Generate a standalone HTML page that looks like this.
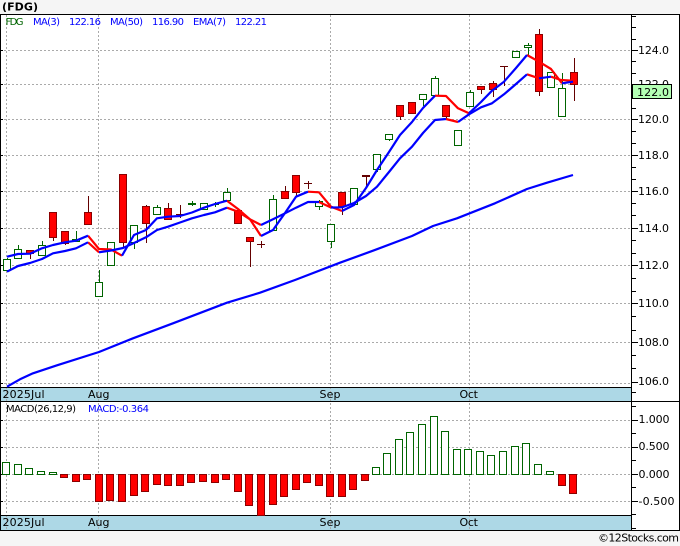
<!DOCTYPE html>
<html><head><meta charset="utf-8"><style>
html,body{margin:0;padding:0;background:#f5f5f5;width:680px;height:546px;overflow:hidden}
svg{display:block}
text{font-family:"DejaVu Sans","Liberation Sans",sans-serif}
.ax{font-size:11px;fill:#000}
.lg{font-size:10px}
</style></head><body>
<svg width="680" height="546" viewBox="0 0 680 546" xmlns="http://www.w3.org/2000/svg">
<rect x="0" y="0" width="680" height="546" fill="#f5f5f5"/>
<text x="2" y="10.5" font-size="11" font-weight="bold" fill="#000" textLength="36">(FDG)</text>
<rect x="0" y="14" width="680" height="517" fill="#fff"/>
<!-- bands -->
<rect x="0" y="387" width="632" height="14" fill="#add8e6"/>
<rect x="0" y="515" width="632" height="15" fill="#add8e6"/>
<!-- grid -->
<g stroke="#aaa" stroke-width="1" stroke-dasharray="2 2" fill="none" shape-rendering="crispEdges">
<path d="M0 50.5H632M0 84.5H632M0 119.5H632M0 155.5H632M0 191.5H632M0 228.5H632M0 265.5H632M0 303.5H632M0 342.5H632M0 383.5H632M0 420.5H632M0 447.5H632M0 474.5H632M0 501.5H632"/>
<path d="M6.5 15V530M98.5 15V530M330.5 15V530M469.5 15V530"/>
</g>
<!-- frame -->
<g stroke="#000" stroke-width="1" fill="none" shape-rendering="crispEdges">
<path d="M0 14.5H680M0 387.5H632M0 401.5H680M0 515.5H632M0 530.5H680M631.5 14V531M679.5 14V531M0.5 14V531"/>
<path d="M0 50.5H3M0 84.5H3M0 119.5H3M0 155.5H3M0 191.5H3M0 228.5H3M0 265.5H3M0 303.5H3M0 342.5H3M0 383.5H3M0 420.5H3M0 447.5H3M0 474.5H3M0 501.5H3"/>
<path d="M632 50.5H638M632 84.5H638M632 119.5H638M632 155.5H638M632 191.5H638M632 228.5H638M632 265.5H638M632 303.5H638M632 342.5H638M632 382.5H638M632 420.5H638M632 447.5H638M632 474.5H638M632 501.5H638"/>
<path d="M632 16.5H636M632 27.5H636M632 39.5H636M632 61.5H636M632 73.5H636M632 108.5H636M632 131.5H636M632 143.5H636M632 167.5H636M632 179.5H636M632 203.5H636M632 215.5H636M632 240.5H636M632 253.5H636M632 278.5H636M632 291.5H636M632 316.5H636M632 330.5H636M632 355.5H636M632 368.5H636M632 392.5H636M632 406.5H636M632 433.5H636M632 460.5H636M632 487.5H636M632 514.5H636M632 528.5H636"/>
</g>
<!-- wicks green -->
<path shape-rendering="crispEdges" fill="none" stroke="#006400" d="M7.5 258V272M18.5 245V250M42.5 241V246M76.5 231V242M99.5 270V283M111.5 242V266M134.5 225V249M157.5 205V208M192.5 201V206M215.5 202V207M212 204.5H219M227.5 188V193M273.5 195V200M319.5 200V210M331.5 224V248M377.5 154V172M389.5 134V141M423.5 94V106M435.5 76V79M470.5 90V93M528.5 43V55M562.5 73V89"/>
<!-- wicks red -->
<path shape-rendering="crispEdges" fill="none" stroke="#640000" d="M30.5 250V259M53.5 212V241M65.5 231V245M88.5 196V213M123.5 174V247M146.5 205V243M168.5 203V209M250.5 237V267M285.5 186V192M296.5 175V196M342.5 192V215M400.5 105V120M446.5 105V120M481.5 86V94M493.5 81V97M539.5 29V96M574.5 58V101M180.5 205V218M176 214.5H184M261.5 241V248M257 244.5H265M308.5 181V189M304 183.5H312M366.5 176V186M362 175.5H370M362 176.5H370M504.5 66V86M500 66.5H508"/>
<!-- green bodies -->
<g fill="#fff" stroke="#006400" shape-rendering="crispEdges" transform="translate(-0.5 0)">
<rect x="4" y="259.5" width="7" height="11"/>
<rect x="15" y="249.5" width="7" height="9"/>
<rect x="39" y="245.5" width="7" height="10"/>
<rect x="73" y="239.5" width="7" height="2"/>
<rect x="96" y="282.5" width="7" height="14"/>
<rect x="108" y="242.5" width="7" height="23"/>
<rect x="131" y="225.5" width="7" height="17"/>
<rect x="154" y="207.5" width="7" height="7"/>
<rect x="189" y="203.5" width="7" height="1" fill="#006400"/>
<rect x="201" y="203.5" width="7" height="6"/>
<rect x="224" y="192.5" width="7" height="8"/>
<rect x="270" y="199.5" width="7" height="31"/>
<rect x="316" y="201.5" width="7" height="5"/>
<rect x="328" y="224.5" width="7" height="17"/>
<rect x="351" y="188.5" width="7" height="16"/>
<rect x="374" y="154.5" width="7" height="15"/>
<rect x="386" y="134.5" width="7" height="5"/>
<rect x="420" y="94.5" width="7" height="5"/>
<rect x="432" y="78.5" width="7" height="17"/>
<rect x="455" y="130.5" width="7" height="15"/>
<rect x="467" y="92.5" width="7" height="14"/>
<rect x="513" y="51.5" width="7" height="6"/>
<rect x="525" y="45.5" width="7" height="2"/>
<rect x="548" y="72.5" width="7" height="15"/>
<rect x="559" y="88.5" width="7" height="28"/>
</g>
<!-- red bodies -->
<g fill="#f00" stroke="#8b0000" shape-rendering="crispEdges" transform="translate(-0.5 0)">
<rect x="27" y="250.5" width="7" height="3"/>
<rect x="50" y="212.5" width="7" height="25"/>
<rect x="62" y="231.5" width="7" height="12"/>
<rect x="85" y="212.5" width="7" height="12"/>
<rect x="120" y="174.5" width="7" height="68"/>
<rect x="143" y="206.5" width="7" height="17"/>
<rect x="165" y="208.5" width="7" height="11"/>
<rect x="235" y="210.5" width="7" height="13"/>
<rect x="247" y="237.5" width="7" height="4"/>
<rect x="282" y="191.5" width="7" height="7"/>
<rect x="293" y="175.5" width="7" height="17"/>
<rect x="339" y="192.5" width="7" height="14"/>
<rect x="397" y="105.5" width="7" height="11"/>
<rect x="409" y="102.5" width="7" height="11"/>
<rect x="443" y="105.5" width="7" height="11"/>
<rect x="478" y="86.5" width="7" height="3"/>
<rect x="490" y="83.5" width="7" height="6"/>
<rect x="536" y="34.5" width="7" height="57"/>
<rect x="571" y="72.5" width="7" height="12"/>
</g>
<!-- lines -->
<g fill="none" stroke-width="2.2" stroke-linejoin="round">
<path stroke="#f00" d="M88 235.7L99 249L111 249.5L122 255.7"/>
<path stroke="#f00" d="M88 242.3L99 252.3"/>
<path stroke="#f00" d="M227 200.7L238 209L250 219.3L261 236"/>
<path stroke="#f00" d="M227 207.7L238 211.7L250 219.3L261 225"/>
<path stroke="#f00" d="M308 191.7L319 192.3L331 206.7L342 211"/>
<path stroke="#f00" d="M319 202L331 207.5"/>
<path stroke="#f00" d="M435 95.7L446 96L458 108.3L469 113.3"/>
<path stroke="#f00" d="M446 119L458 122"/>
<path stroke="#f00" d="M527 55L539 61.7L551 69L562 83.3"/>
<path stroke="#f00" d="M527 74.3L539 78.3"/>
<path stroke="#f00" d="M551 76.7L561 80L573 80.7"/>
<path stroke="#00f" d="M7 256.7L18 254L30 253.7L42 248.3L53 245L65 242.3L76 240.7L88 235.7"/>
<path stroke="#00f" d="M122 255.7L134 235L146 230L157 218.3L168 216.7L180 216L192 212.5L204 207.7L215 204L227 200.7"/>
<path stroke="#00f" d="M261 236L273 230L285 213L296 196.7L308 191.7"/>
<path stroke="#00f" d="M342 211L354 205L366 188L377 170L389 152L400 135L412 122L423 108L435 95.7"/>
<path stroke="#00f" d="M469 113.3L481 102L492 90.7L504 81.7L516 68L527 55"/>
<path stroke="#00f" d="M562 83.3L573 81.7"/>
<path stroke="#00f" d="M7 271.7L18 266L30 263L42 259L53 253.3L65 251L76 248.3L88 242.3"/>
<path stroke="#00f" d="M99 252.3L111 250.5L123 248L134 243L146 237.3L157 230L168 226.7L180 222.5L192 218.3L204 215L215 212.3L227 207.7"/>
<path stroke="#00f" d="M261 225L273 219.3L285 213.3L296 207.7L308 202L319 202"/>
<path stroke="#00f" d="M331 207.5L342 207.3L354 203L366 196L377 186.7L389 172L400 158.3L412 146.7L423 133L435 120L446 119"/>
<path stroke="#00f" d="M458 122L469 114.3L481 107.3L492 103.3L504 94.3L516 84L527 74.3"/>
<path stroke="#00f" d="M539 78.3L551 76.7"/>
<path stroke="#00f" d="M7 386.7L20 379.3L33 373.3L57 365.3L99 352L133 338.3L173 323.3L227 302.7L260 292.7L295 280L340 262.7L373 250.7L412 236L433 226L457 218.3L495 203.3L527 189L547 182.7L573 175"/>
</g>
<!-- MACD bars -->
<g fill="#fff" stroke="#006400" shape-rendering="crispEdges" transform="translate(-0.5 0)">
<rect x="3" y="462.5" width="7" height="12"/><rect x="15" y="464.5" width="7" height="10"/><rect x="26" y="468.5" width="7" height="6"/><rect x="38" y="471.5" width="7" height="3"/><rect x="50" y="472.5" width="7" height="2"/>
<rect x="373" y="467.5" width="7" height="7"/><rect x="384" y="453.5" width="7" height="21"/><rect x="396" y="439.5" width="7" height="35"/><rect x="407" y="432.5" width="7" height="42"/><rect x="419" y="424.5" width="7" height="50"/><rect x="431" y="416.5" width="7" height="58"/><rect x="442" y="431.5" width="7" height="43"/><rect x="454" y="449.5" width="7" height="25"/><rect x="465" y="449.5" width="7" height="25"/><rect x="477" y="451.5" width="7" height="23"/><rect x="488" y="455.5" width="7" height="19"/><rect x="500" y="451.5" width="7" height="23"/><rect x="512" y="446.5" width="7" height="28"/><rect x="523" y="443.5" width="7" height="31"/><rect x="535" y="464.5" width="7" height="10"/><rect x="547" y="471.5" width="7" height="3"/>
</g>
<g fill="#f00" stroke="#8b0000" shape-rendering="crispEdges" transform="translate(-0.5 0)">
<rect x="61" y="474.5" width="7" height="3"/><rect x="73" y="474.5" width="7" height="7"/><rect x="84" y="474.5" width="7" height="5"/><rect x="96" y="474.5" width="7" height="27"/><rect x="107" y="474.5" width="7" height="26"/><rect x="119" y="474.5" width="7" height="27"/><rect x="131" y="474.5" width="7" height="21"/><rect x="142" y="474.5" width="7" height="17"/><rect x="154" y="474.5" width="7" height="10"/><rect x="165" y="474.5" width="7" height="11"/><rect x="177" y="474.5" width="7" height="11"/><rect x="188" y="474.5" width="7" height="8"/><rect x="200" y="474.5" width="7" height="7"/><rect x="212" y="474.5" width="7" height="8"/><rect x="223" y="474.5" width="7" height="5"/><rect x="235" y="474.5" width="7" height="17"/><rect x="246" y="474.5" width="7" height="31"/><rect x="258" y="474.5" width="7" height="41"/><rect x="270" y="474.5" width="7" height="30"/><rect x="281" y="474.5" width="7" height="22"/><rect x="293" y="474.5" width="7" height="15"/><rect x="304" y="474.5" width="7" height="8"/><rect x="316" y="474.5" width="7" height="11"/><rect x="327" y="474.5" width="7" height="22"/><rect x="339" y="474.5" width="7" height="22"/><rect x="350" y="474.5" width="7" height="15"/><rect x="362" y="474.5" width="7" height="6"/><rect x="559" y="474.5" width="7" height="11"/><rect x="570" y="474.5" width="7" height="19"/>
</g>
<!-- legends -->
<g class="lg">
<text class="lg" x="5.5" y="25" fill="#006400" textLength="18">FDG</text>
<text class="lg" x="33" y="25" fill="#00f" textLength="27">MA(3)</text>
<text class="lg" x="69" y="25" fill="#00f" textLength="32">122.16</text>
<text class="lg" x="110" y="25" fill="#00f" textLength="33">MA(50)</text>
<text class="lg" x="152" y="25" fill="#00f" textLength="32">116.90</text>
<text class="lg" x="193" y="25" fill="#00f" textLength="33">EMA(7)</text>
<text class="lg" x="235" y="25" fill="#00f" textLength="32">122.21</text>
<text class="lg" x="6" y="412" fill="#000" textLength="70">MACD(26,12,9)</text>
<text class="lg" x="88" y="412" fill="#00f" textLength="61">MACD:-0.364</text>
</g>
<!-- axis labels -->
<text class="ax" x="638" y="54" textLength="31">124.0</text>
<text class="ax" x="638" y="123" textLength="31">120.0</text>
<text class="ax" x="638" y="159" textLength="31">118.0</text>
<text class="ax" x="638" y="195" textLength="31">116.0</text>
<text class="ax" x="638" y="232" textLength="31">114.0</text>
<text class="ax" x="638" y="269" textLength="31">112.0</text>
<text class="ax" x="638" y="307" textLength="31">110.0</text>
<text class="ax" x="638" y="346" textLength="31">108.0</text>
<text class="ax" x="638" y="385" textLength="31">106.0</text>
<text class="ax" x="638" y="88" textLength="31">122.0</text>
<rect x="632.5" y="84.5" width="39" height="14" fill="#b4ffb4" stroke="#000"/>
<text class="ax" x="637" y="96" textLength="32">122.0</text>
<text class="ax" x="638.5" y="423" textLength="31">1.000</text>
<text class="ax" x="638.5" y="450" textLength="31">0.500</text>
<text class="ax" x="638.5" y="478" textLength="31">0.000</text>
<text class="ax" x="638.5" y="505" textLength="36">-0.500</text>
<text class="ax" x="2.5" y="398" textLength="42">2025Jul</text>
<text class="ax" x="88" y="398" textLength="21.5">Aug</text>
<text class="ax" x="319.5" y="398" textLength="21">Sep</text>
<text class="ax" x="459.5" y="398" textLength="18.5">Oct</text>
<text class="ax" x="2.5" y="526" textLength="42">2025Jul</text>
<text class="ax" x="88" y="526" textLength="21.5">Aug</text>
<text class="ax" x="319.5" y="526" textLength="21">Sep</text>
<text class="ax" x="459.5" y="526" textLength="18.5">Oct</text>
<text class="ax" x="598" y="541.5" textLength="81">©12Stocks.com</text>
</svg>
</body></html>
